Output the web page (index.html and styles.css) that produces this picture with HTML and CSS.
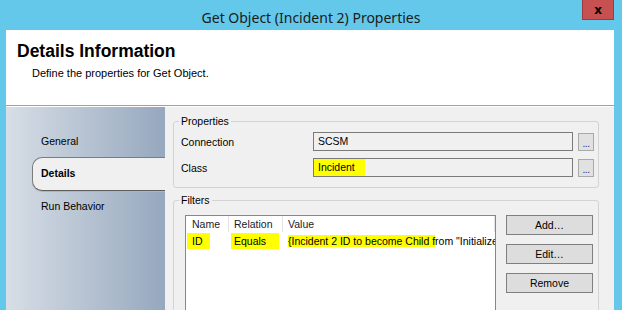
FILE: index.html
```html
<!DOCTYPE html>
<html lang="en">
<head>
    <meta charset="UTF-8">
    <title>Get Object (Incident 2) Properties</title>
    <link rel="stylesheet" href="styles.css">
</head>
<body>
    <div class="window">
        <div class="titlebar">
            <span class="title">Get Object (Incident 2) Properties</span>
            <button class="close">x</button>
        </div>

        <div class="frame">
            <div class="header">
                <h1>Details Information</h1>
                <p class="subtitle">Define the properties for Get Object.</p>
            </div>

            <div class="main">
                <nav class="steps">
                    <div class="step">General</div>
                    <div class="step active">Details</div>
                    <div class="step">Run Behavior</div>
                </nav>

                <div class="pane">
                    <fieldset class="group props">
                        <legend>Properties</legend>
                        <div class="field-row">
                            <label>Connection</label>
                            <div class="textbox">SCSM</div>
                            <button class="dots">...</button>
                        </div>
                        <div class="field-row">
                            <label>Class</label>
                            <div class="textbox"><span class="mark mark-class">Incident</span></div>
                            <button class="dots">...</button>
                        </div>
                    </fieldset>

                    <fieldset class="group filters">
                        <legend>Filters</legend>
                        <div class="filters-body">
                            <div class="list">
                                <div class="list-row list-head">
                                    <div class="cell">Name</div>
                                    <div class="cell">Relation</div>
                                    <div class="cell">Value</div>
                                </div>
                                <div class="list-row">
                                    <div class="cell"><span class="mark mark-id">ID</span></div>
                                    <div class="cell"><span class="mark mark-rel">Equals</span></div>
                                    <div class="cell"><span class="mark">{Incident 2 ID to become Child f</span>rom "Initialize Data"}</div>
                                </div>
                            </div>
                            <div class="actions">
                                <button class="btn">Add…</button>
                                <button class="btn">Edit…</button>
                                <button class="btn">Remove</button>
                            </div>
                        </div>
                    </fieldset>
                </div>
            </div>
        </div>
    </div>
</body>
</html>
```

FILE: styles.css
```css
body {
    margin: 0;
    font-family: 'Liberation Sans', Arial, sans-serif;
    color: #000;
}

.window {
    width: 622px;
    height: 310px;
    background-color: #63c8e9;
    overflow: hidden;
}

/* barra de titulo */
.titlebar {
    display: grid;
    grid-template-columns: 1fr auto 1fr;
    height: 30px;
}

.title {
    grid-column: 2;
    font-family: 'Noto Sans', sans-serif;
    font-size: 14px;
    line-height: 22px;
    padding-top: 7px;
    color: #1b1b1b;
}

.close {
    grid-column: 3;
    justify-self: end;
    width: 32px;
    height: 20px;
    margin-right: 8px;
    padding: 0;
    background-color: #c75050;
    border: 1px solid #9b3c3c;
    border-top: none;
    font-family: 'DejaVu Sans', sans-serif;
    font-weight: bold;
    font-size: 12px;
    line-height: 16px;
    color: #000;
}

.frame {
    margin: 0 8px 0 6px;
    height: 280px;
    background-color: #f0f0f0;
    display: flex;
    flex-direction: column;
}

/* cabecera blanca */
.header {
    box-sizing: border-box;
    height: 76px;
    background-color: #fff;
    border-bottom: 1px solid #a0a0a0;
    padding: 11px 0 0 11px;
}

h1 {
    margin: 0;
    font-size: 17.5px;
    line-height: 20px;
    font-weight: bold;
}

.subtitle {
    margin: 5px 0 0 15px;
    font-size: 11px;
    line-height: 14px;
}

.main {
    flex: 1;
    display: flex;
    border-top: 1px solid #fff;
    min-height: 0;
}

/* menu lateral */
.steps {
    width: 160px;
    padding-top: 25px;
    background: linear-gradient(to right, #d7dee6, #96a8be);
    font-size: 10.5px;
}

.step {
    height: 18px;
    line-height: 18px;
    padding-left: 35px;
}

.step.active {
    box-sizing: border-box;
    height: 34px;
    line-height: 31px;
    margin: 7px 0 6px 26px;
    padding-left: 8px;
    background-color: #f0f0f0;
    border: 1px solid #7c7c7c;
    border-right: none;
    border-bottom-color: #5e5e5e;
    border-radius: 10px 0 0 10px;
    box-shadow: 0 1px 0 #b4b4b4;
    font-weight: bold;
}

.pane {
    flex: 1;
    padding: 7.5px 15px 0 8px;
    font-size: 10.5px;
}

.group {
    margin: 0;
    min-width: 0;
    border: 1px solid #d3d3d3;
    border-radius: 3px;
}

legend {
    padding: 0 2px;
    line-height: 13px;
}

.props {
    padding: 4.5px 4px 10px 7px;
}

.props legend {
    margin-left: -2px;
}

.field-row {
    display: flex;
    align-items: center;
    height: 19px;
}

.field-row + .field-row {
    margin-top: 7px;
}

.field-row label {
    width: 132px;
}

.textbox {
    box-sizing: border-box;
    width: 260px;
    height: 19px;
    border: 1px solid #7a7a7a;
    background-color: #f0f0f0;
    padding-left: 4px;
    line-height: 17px;
    white-space: nowrap;
}

.dots {
    box-sizing: border-box;
    width: 16px;
    height: 18px;
    margin-left: 5px;
    padding: 0;
    border: 1px solid #a9a9a9;
    background-color: #e1e1e1;
    color: #1e1e78;
    font-family: 'Liberation Sans', Arial, sans-serif;
    font-size: 10px;
    line-height: 20px;
    letter-spacing: -0.5px;
}

.mark {
    background-color: #ffff00;
}

.mark-class {
    display: inline-block;
    height: 17px;
    margin-left: -4px;
    padding: 0 10px 0 4px;
}

.filters {
    margin-top: 5.5px;
    padding: 8.5px 4px 0 11px;
    height: 120px;
}

.filters legend {
    margin-left: -6px;
}

.filters-body {
    display: flex;
    gap: 10px;
}

/* lista de filtros */
.list {
    box-sizing: border-box;
    width: 311px;
    height: 120px;
    border: 1px solid #828790;
    background-color: #fff;
    overflow: hidden;
}

.list-row {
    display: grid;
    grid-template-columns: 43px 54px 1fr;
    height: 18px;
    line-height: 18px;
}

.list-head {
    height: 16px;
    line-height: 16px;
    color: #1a1a2a;
}

.list-head .cell {
    border-right: 1px solid #e3e3e3;
}

.cell {
    box-sizing: border-box;
    padding-left: 6px;
    white-space: nowrap;
    overflow: hidden;
}

.cell:nth-child(2) {
    padding-left: 5px;
}

.cell:nth-child(3) {
    padding-left: 5px;
}

.mark-id {
    display: inline-block;
    line-height: 16px;
    margin-left: -5px;
    padding: 0 7px 0 5px;
}

.mark-rel {
    display: inline-block;
    line-height: 16px;
    margin-left: -3px;
    padding: 0 13px 0 3px;
}

.actions {
    display: flex;
    flex-direction: column;
    gap: 9px;
}

.btn {
    width: 87px;
    height: 20px;
    padding: 0;
    border: 1px solid #7f7f7f;
    background-color: #dddddd;
    font-family: 'Liberation Sans', Arial, sans-serif;
    font-size: 10.5px;
    color: #000;
}
```
